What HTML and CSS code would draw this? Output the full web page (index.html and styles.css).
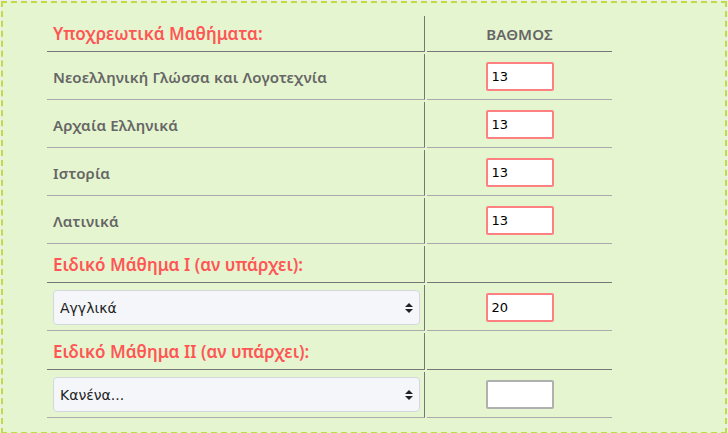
FILE: index.html
```html
<!DOCTYPE html>
<html lang="el">
<head>
    <meta charset="UTF-8">
    <title>Μόρια - Βαθμοί</title>
    <link rel="stylesheet" href="styles.css">
</head>
<body>

<div class="form-box">
    <table class="grades">
        <tr class="head-row first">
            <td class="subj"><span class="group-title">Υποχρεωτικά Μαθήματα:</span></td>
            <td class="grade grade-title">ΒΑΘΜΟΣ</td>
        </tr>
        <tr>
            <td class="subj">Νεοελληνική Γλώσσα και Λογοτεχνία</td>
            <td class="grade"><input type="text" class="grade-input filled" value="13"></td>
        </tr>
        <tr>
            <td class="subj">Αρχαία Ελληνικά</td>
            <td class="grade"><input type="text" class="grade-input filled" value="13"></td>
        </tr>
        <tr>
            <td class="subj">Ιστορία</td>
            <td class="grade"><input type="text" class="grade-input filled" value="13"></td>
        </tr>
        <tr>
            <td class="subj">Λατινικά</td>
            <td class="grade"><input type="text" class="grade-input filled" value="13"></td>
        </tr>
        <tr class="head-row">
            <td class="subj"><span class="group-title">Ειδικό Μάθημα Ι (αν υπάρχει):</span></td>
            <td class="grade"></td>
        </tr>
        <tr>
            <td class="subj">
                <select class="special-select">
                    <option>Αγγλικά</option>
                    <option>Γαλλικά</option>
                    <option>Γερμανικά</option>
                </select>
            </td>
            <td class="grade"><input type="text" class="grade-input filled" value="20"></td>
        </tr>
        <tr class="head-row">
            <td class="subj"><span class="group-title">Ειδικό Μάθημα ΙΙ (αν υπάρχει):</span></td>
            <td class="grade"></td>
        </tr>
        <tr>
            <td class="subj">
                <select class="special-select">
                    <option>Κανένα...</option>
                    <option>Γαλλικά</option>
                    <option>Γερμανικά</option>
                </select>
            </td>
            <td class="grade"><input type="text" class="grade-input" value=""></td>
        </tr>
    </table>
</div>

</body>
</html>
```

FILE: styles.css
```css
body {
    margin: 0;
    padding: 1px;
    background: #eeeeee;
    font-family: "Noto Sans", "DejaVu Sans", sans-serif;
}
.form-box {
    border: 2px dashed #bfdc45;
    background: #e5f5cf;
    padding: 11px 0 12px 42px;
    width: 680px;
}
.grades {
    border-collapse: separate;
    border-spacing: 2px;
}
.grades td {
    border-bottom: 1px solid #aaaaaa;
    padding: 0 6px;
    height: 45px;
    color: #666666;
    font-size: 15px;
    font-weight: 600;
    letter-spacing: 0.15px;
}
.grades td.subj {
    width: 367px;
    padding-right: 4px;
    border-right: 1px solid #777777;
}
.grades td.grade {
    width: 173px;
    text-align: center;
}
.grades .head-row td {
    height: 36px;
    border-bottom-color: #777777;
}
.grades .head-row.first td {
    height: 35px;
}
.group-title {
    color: #ff5555;
    font-size: 17px;
    letter-spacing: 0;
}
.grade-title {
    font-size: 13px;
}
.grade-input {
    width: 56px;
    height: 25px;
    padding: 0 4px;
    border: 2px solid #b0b0b0;
    border-radius: 2px;
    background: #ffffff;
    font-family: "DejaVu Sans", sans-serif;
    font-size: 13px;
    color: #000;
    box-sizing: content-box;
}
.grade-input.filled {
    border-color: #ff8080;
}
.special-select {
    width: 100%;
    height: 35px;
    padding: 0 24px 0 6px;
    border: 1px solid #d4d8dc;
    border-radius: 4px;
    background-color: #f4f6fa;
    background-image: url("data:image/svg+xml;charset=utf8,%3Csvg xmlns='http://www.w3.org/2000/svg' viewBox='0 0 4 5'%3E%3Cpath fill='%23222' d='M2 0L0 2h4zm0 5L0 3h4z'/%3E%3C/svg%3E");
    background-repeat: no-repeat;
    background-position: right 6px center;
    background-size: 8px 10px;
    font-family: "DejaVu Sans", sans-serif;
    font-size: 14px;
    color: #222;
    -webkit-appearance: none;
    appearance: none;
}
```
